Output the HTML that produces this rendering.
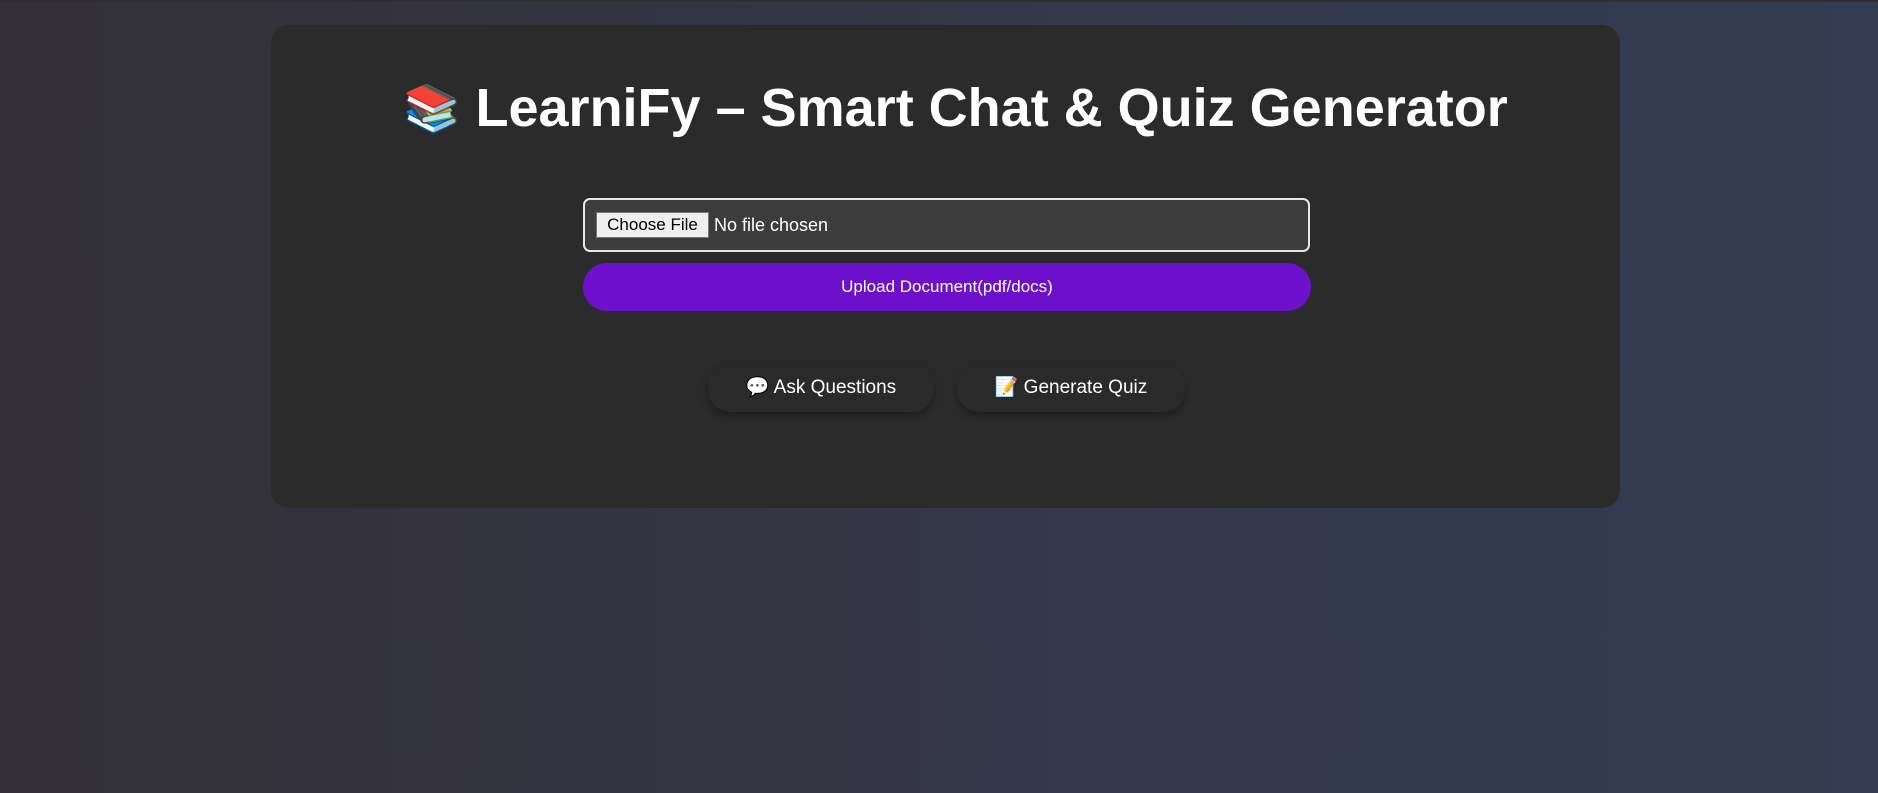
<!DOCTYPE html>
<html><head><meta charset="utf-8"><style>
html,body{margin:0;padding:0;width:1878px;height:793px;overflow:hidden}
body{background:linear-gradient(90deg,#333037 0%,#343849 60%,#323c52 100%);font-family:"Liberation Sans",Arial,sans-serif;position:relative;border-top:2px solid #2e2e30;box-sizing:border-box}
.card{position:absolute;left:271px;top:23px;width:1349px;height:483px;background:#2b2b2b;border-radius:18px}
h1{position:absolute;left:20px;right:0;top:48px;margin:0;text-align:center;color:#fff;font-size:54px;font-weight:bold;line-height:70px}
.file{position:absolute;left:312px;top:173px;width:727px;height:54px;box-sizing:border-box;border:2px solid #e6e6e6;border-radius:7px;background:#3c3c3c}
.cf{position:absolute;left:11px;top:12px;width:113px;height:26px;background:#efefef;border:1px solid #767676;box-sizing:border-box;font-size:17px;line-height:24px;text-align:center;color:#000}
.nf{position:absolute;left:129px;top:12px;font-size:18px;line-height:26px;color:#fff}
.up{position:absolute;left:312px;top:238px;width:728px;height:48px;border-radius:24px;background:#6c10cb;color:#fff;font-size:17px;line-height:48px;text-align:center}
.btn{position:absolute;top:339px;height:48px;border-radius:22px;background:#2a2a2a;box-shadow:0 4px 10px rgba(0,0,0,.35);color:#fff;font-size:19px;line-height:48px;text-align:center}
</style></head><body>
<div class="card">
<h1><span style="font-size:46px;vertical-align:2px">📚</span> LearniFy – Smart Chat &amp; Quiz Generator</h1>
<div class="file"><div class="cf">Choose File</div><div class="nf">No file chosen</div></div>
<div class="up">Upload Document(pdf/docs)</div>
<div class="btn" style="left:437px;width:226px">💬 Ask Questions</div>
<div class="btn" style="left:686px;width:228px">📝 Generate Quiz</div>
</div>
</body></html>
